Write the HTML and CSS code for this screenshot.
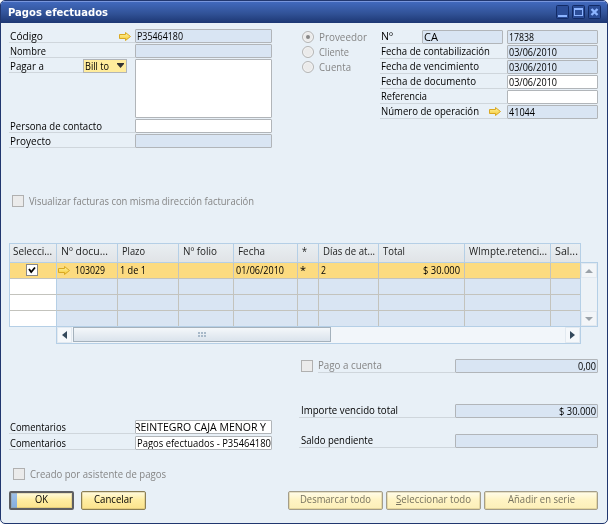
FILE: index.html
```html
<!DOCTYPE html>
<html lang="es">
<head>
<meta charset="utf-8">
<title>Pagos efectuados</title>
<link rel="stylesheet" href="styles.css">
</head>
<body>
<svg class="defs" width="0" height="0">
  <defs>
    <linearGradient id="gold" x1="0" y1="0" x2="0" y2="1"><stop offset="0" stop-color="#fff6a8"/><stop offset="1" stop-color="#f5c62c"/></linearGradient>
    <symbol id="arrow" viewBox="0 0 12 9"><path d="M.5 2.5H6.5V.5L11.5 4.5 6.5 8.5V6.5H.5Z" fill="url(#gold)" stroke="#d9a822" stroke-width="1"/></symbol>
  </defs>
</svg>
<div class="window">
  <header class="titlebar">
    <h1><span data-w="100">Pagos efectuados</span></h1>
    <div class="controls">
      <svg width="13" height="14" viewBox="0 0 13 14"><rect x=".5" y=".5" width="12" height="13" rx="1" class="cbox"/><path d="M2 10h9v2H2z" fill="#8cb4ff"/></svg>
      <svg width="13" height="14" viewBox="0 0 13 14"><rect x=".5" y=".5" width="12" height="13" rx="1" class="cbox"/><path d="M2 3h9v8H2zM3 5v5h7V5z" fill="#8cb4ff" fill-rule="evenodd"/></svg>
      <svg width="13" height="14" viewBox="0 0 13 14"><rect x=".5" y=".5" width="12" height="13" rx="1" class="cbox"/><path d="M3.5 4l6 6M9.5 4l-6 6" stroke="#8cb4ff" stroke-width="2.4"/></svg>
    </div>
  </header>

  <main>
    <section class="top">
      <div class="form partner">
        <div class="row"><label><span data-w="33">Código</span><svg class="arrow"><use href="#arrow"/></svg></label><div class="field ro"><span data-w="46">P35464180</span></div></div>
        <div class="row"><label><span data-w="36">Nombre</span></label><div class="field ro"></div></div>
        <div class="row tall"><label class="short"><span data-w="34">Pagar a</span></label><div class="combo"><span data-w="24">Bill to</span><svg width="7" height="5"><path d="M0 0h7v1L3.500 5 0 1z" fill="#333"/></svg></div><div class="field area"></div></div>
        <div class="row"><label><span data-w="92">Persona de contacto</span></label><div class="field"></div></div>
        <div class="row"><label><span data-w="41">Proyecto</span></label><div class="field ro"></div></div>
      </div>
      <div class="radios">
        <div class="radio"><i class="on"></i><span data-w="48">Proveedor</span></div>
        <div class="radio"><i></i><span data-w="30">Cliente</span></div>
        <div class="radio"><i></i><span data-w="32">Cuenta</span></div>
      </div>
      <div class="form document">
        <div class="row"><label class="num"><span data-w="12">Nº</span></label><div class="field ro series"><span data-w="14">CA</span></div><div class="field ro"><span data-w="25">17838</span></div></div>
        <div class="row"><label><span data-w="109">Fecha de contabilización</span></label><div class="field ro"><span data-w="48">03/06/2010</span></div></div>
        <div class="row"><label><span data-w="98">Fecha de vencimiento</span></label><div class="field ro"><span data-w="48">03/06/2010</span></div></div>
        <div class="row"><label><span data-w="95">Fecha de documento</span></label><div class="field"><span data-w="48">03/06/2010</span></div></div>
        <div class="row"><label><span data-w="46">Referencia</span></label><div class="field"></div></div>
        <div class="row"><label><span data-w="98">Número de operación</span><svg class="arrow"><use href="#arrow"/></svg></label><div class="field ro"><span data-w="26">41044</span></div></div>
      </div>
    </section>

    <div class="check same-address"><i></i><span data-w="225">Visualizar facturas con misma dirección facturación</span></div>

    <section class="grid-area">
      <div class="table">
        <div class="tr head"><div><span data-w="39">Selecci...</span></div><div><span data-w="47">Nº docu...</span></div><div><span data-w="23">Plazo</span></div><div><span data-w="34">Nº folio</span></div><div><span data-w="27">Fecha</span></div><div><span data-w="5">*</span></div><div><span data-w="52">Días de at...</span></div><div><span data-w="22">Total</span></div><div><span data-w="78">WImpte.retenci...</span></div><div><span data-w="23">Sal...</span></div></div>
        <div class="tr sel"><div class="pick"><svg width="12" height="12"><rect x=".5" y=".5" width="11" height="11" fill="#fff" stroke="#888"/><path d="M3 5l2.200 3L9 3.500" fill="none" stroke="#000" stroke-width="1.800"/></svg></div><div class="doc"><svg class="arrow"><use href="#arrow"/></svg><span data-w="30">103029</span></div><div><span data-w="26">1 de 1</span></div><div></div><div><span data-w="48">01/06/2010</span></div><div><span data-w="6">*</span></div><div><span data-w="5">2</span></div><div class="amount"><span data-w="37">$ 30.000</span></div><div></div><div></div></div>
        <div class="tr"><div></div><div></div><div></div><div></div><div></div><div></div><div></div><div></div><div></div><div></div></div>
        <div class="tr"><div></div><div></div><div></div><div></div><div></div><div></div><div></div><div></div><div></div><div></div></div>
        <div class="tr"><div></div><div></div><div></div><div></div><div></div><div></div><div></div><div></div><div></div><div></div></div>
      </div>
      <div class="vscroll">
        <div class="vb"><svg width="8" height="4"><path d="M4 0l4 4H0z" fill="#9aa1a8"/></svg></div>
        <div class="vb"><svg width="8" height="4"><path d="M4 4l4-4H0z" fill="#9aa1a8"/></svg></div>
      </div>
      <div class="hscroll">
        <div class="hb"><svg width="5" height="8"><path d="M0 4l5-4v8z" fill="#34495c"/></svg></div>
        <div class="thumb"><b></b></div>
        <div class="hb right"><svg width="5" height="8"><path d="M5 4L0 0v8z" fill="#34495c"/></svg></div>
      </div>
    </section>

    <section class="bottom">
      <div class="form comments">
        <div class="row"><label><span data-w="56">Comentarios</span></label><div class="field clip"><span data-w="132">REINTEGRO CAJA MENOR Y</span></div></div>
        <div class="row"><label><span data-w="56">Comentarios</span></label><div class="field"><span data-w="134">Pagos efectuados - P35464180</span></div></div>
        <div class="check wizard"><i></i><span data-w="136">Creado por asistente de pagos</span></div>
      </div>
      <div class="form totals">
        <div class="row"><i class="box"></i><label class="dim"><span data-w="64">Pago a cuenta</span></label><div class="field ro amt"><span data-w="18">0,00</span></div></div>
        <div class="row due"><label><span data-w="97">Importe vencido total</span></label><div class="field ro amt"><span data-w="37">$ 30.000</span></div></div>
        <div class="row"><label><span data-w="72">Saldo pendiente</span></label><div class="field ro amt"></div></div>
      </div>
    </section>

    <footer>
      <button class="default"><span data-w="13">OK</span></button>
      <button><span data-w="39">Cancelar</span></button>
      <button class="off first"><span data-w="71">Desmarcar todo</span></button>
      <button class="off"><span data-w="75"><u>S</u>eleccionar todo</span></button>
      <button class="off wide"><span data-w="67">Añadir en serie</span></button>
    </footer>
  </main>
</div>
<script src="fit.js"></script>
</body>
</html>
```
FILE: styles.css
```css
* { box-sizing: border-box; }
body { margin: 0; background: #fff; overflow: hidden; font: 10.5px/14px "Open Sans", "Noto Sans", sans-serif; color: #000; }
.defs { position: absolute; }
svg { display: block; flex: none; }
span[data-w] { display: inline-block; flex: none; white-space: nowrap; transform-origin: 0 50%; }
.window { width: 608px; height: 524px; border: 1px solid #21376f; border-radius: 5px; overflow: hidden; background: #e8f0f7; display: flex; flex-direction: column; }
.titlebar { height: 22px; flex: none; display: flex; justify-content: space-between; padding: 4px 6px 0 7px; border-top: 1px solid #7896dc; background: linear-gradient(#4169bd, #315297 55%, #1d3773); }
h1 { margin: 0; font: 700 11px/14px "DejaVu Sans", sans-serif; color: #fff; }
.controls { display: flex; gap: 3px; margin-top: -1px; }
.cbox { fill: #2b4d98; stroke: #122b66; }
main { flex: 1; padding: 0 8px; display: flex; flex-direction: column; }

.top { display: flex; height: 172px; padding-top: 6px; }
.form { display: flex; flex-direction: column; gap: 1px; }
.row { display: flex; height: 14px; flex: none; }
label { display: flex; align-items: center; justify-content: space-between; height: 14px; width: 126px; flex: none; padding-left: 1px; border-bottom: 1px solid #cfd6dc; line-height: 13px; }
.partner label span, .comments label span { position: relative; top: 1px; }
.arrow { width: 12px; height: 9px; }
.field { height: 14px; border: 1px solid #b1b5b9; border-radius: 1px; background: #fff; padding-left: 1px; line-height: 12px; overflow: hidden; white-space: nowrap; flex: none; }
.ro { background: #d9e5f3; }
.partner { width: 293px; }
.partner .field, .comments .field { width: 137px; }
.partner .arrow { margin: 1px 4px 0 0; }
.tall { height: 59px; }
.short { width: 74px; }
.combo { width: 44px; height: 14px; margin-right: 8px; flex: none; display: flex; justify-content: space-between; padding: 0 2px 0 1px; border: 1px solid #b1b5b9; background: #ffec9c; line-height: 13px; }
.combo svg { margin-top: 3px; }
.partner .area { height: 59px; }

.radios { width: 78px; padding-top: 2px; display: flex; flex-direction: column; gap: 1px; color: #858585; }
.radio { height: 14px; display: flex; gap: 5px; line-height: 12px; }
.radio i { width: 12px; height: 12px; border: 1px solid #b5b5b5; border-radius: 50%; background: #ebebeb; box-shadow: inset 0 0 0 1px #f4f4f4; display: flex; flex: none; }
.radio .on::after { content: ""; width: 4px; height: 4px; margin: 3px; border-radius: 50%; background: #888; }

.document { padding-top: 1px; }
.document label { width: 127px; }
.document .num { width: 42px; }
.document .field { width: 91px; }
.document .series { width: 81px; margin-right: 4px; }
.document .arrow { margin: 0 6px 0 0; }

.check { display: flex; gap: 5px; height: 12px; color: #858585; line-height: 12px; flex: none; }
.check i, .box { width: 12px; height: 12px; border: 1px solid #b0b0b0; background: #ebebeb; flex: none; }
.same-address { margin-left: 3px; }

.grid-area { display: grid; grid-template-columns: 47px 525px 17px; grid-template-rows: 84px 17px; margin-top: 36px; flex: none; }
.table { grid-column: 1 / 3; border: 1px solid #b5cfe6; }
.tr { display: grid; grid-template-columns: 47px 61px 61px 55px 64px 21px 60px 86px 86px 29px; height: 16px; background: #d9e5f3; line-height: 15px; }
.tr > div { border-right: 1px solid #c3c3bd; border-bottom: 1px solid #c3c3bd; padding-left: 2px; overflow: hidden; white-space: nowrap; }
.tr > div:last-child { border-right: 0; }
.tr:last-child { height: 15px; }
.tr:last-child > div { border-bottom: 0; }
.tr > div:first-child { background: #fff; border-right-color: #b5cfe6; }
.head { height: 19px; background: linear-gradient(#e9eef2, #e0e3e6); line-height: 15px; color: #222; }
.head > div, .tr.head > div { border-color: #b5cfe6; padding-left: 4px; background: none; }
.tr.head > div:first-child { padding-left: 3px; }
.sel, .tr.sel > div:first-child { background: #fcdb80; }
.tr .pick { padding: 1px 0 0 16px; }
.tr .doc { display: flex; align-items: center; gap: 5px; padding-left: 1px; }
.tr .amount { text-align: right; padding-right: 4px; }
.vscroll { height: 65px; margin-top: 19px; margin-left: -1px; width: 18px; border: 1px solid #b5cfe6; background: #edf2f7; display: flex; flex-direction: column; justify-content: space-between; }
.vb { height: 15px; display: flex; align-items: center; justify-content: center; background: #f2f5f8; border: 1px solid #e2e9f0; }
.hscroll { grid-column: 2; width: 525px; height: 17px; border: 1px solid #b5cfe6; border-top: 0; background: #f2f6fa; display: flex; }
.hb { width: 15px; display: flex; align-items: center; justify-content: center; background: #f5f8fb; border: 1px solid #e2e9f0; }
.right { margin-left: auto; }
.thumb { width: 258px; height: 15px; margin-left: 1px; border: 1px solid #a4b1bc; background: linear-gradient(#f4f7fa, #dae3ec); display: flex; align-items: center; justify-content: center; }
.thumb b { width: 8px; height: 5px; background: repeating-linear-gradient(90deg, #a8b9c9 0 2px, transparent 2px 3px); -webkit-mask: linear-gradient(#000 0 40%, transparent 40% 60%, #000 60%); mask: linear-gradient(#000 0 40%, transparent 40% 60%, #000 60%); }

.bottom { display: flex; margin-top: 15px; flex: none; height: 132px; }
.comments { width: 290px; padding-top: 61px; gap: 2px; }
.comments .clip { padding: 0; }
.clip span { margin-left: -2px; }
.wizard { margin: 16px 0 0 4px; }
.totals label { width: 156px; padding-left: 2px; }
.totals .dim { width: 137px; padding-left: 0; color: #858585; }
.totals .field { width: 143px; }
.box { margin: 1px 5px 0 2px; }
.due { margin: 30px 0 15px; }
.totals .amt { text-align: right; padding-right: 1px; }

footer { display: flex; gap: 7px; }
button { width: 65px; height: 19px; padding: 0 0 2px; flex: none; border: 1px solid #8b7f55; border-radius: 2px; background: linear-gradient(#fffbe0, #ffeda2 45%, #fbe38c); font: inherit; line-height: 15px; color: #000; box-shadow: inset 0 0 0 1px rgba(160, 140, 80, .25); }
.default { border: 2px solid #5e5f62; line-height: 13px; background: linear-gradient(#9ec0ea, #84aedd) 0 0 / 6px 100% no-repeat, linear-gradient(#fffbe0, #ffeda2 45%, #fbe38c); }
.off { width: 95px; color: #77735f; border-color: #a39d89; background: linear-gradient(#fffceb, #fff4c4 45%, #fcefb8); }
.off + .off { margin-left: -4px; }
.off.wide { width: 114px; }
.first { margin-left: 135px; }
```
FILE: fit.js
```js
// Condense each caption to its nominal width in pixels.
document.querySelectorAll('[data-w]').forEach(function (el) {
  var natural = el.getBoundingClientRect().width;
  var wanted = Number(el.dataset.w);
  el.style.transform = 'scaleX(' + wanted / natural + ')';
  el.style.marginRight = wanted - natural + 'px';
});
```
